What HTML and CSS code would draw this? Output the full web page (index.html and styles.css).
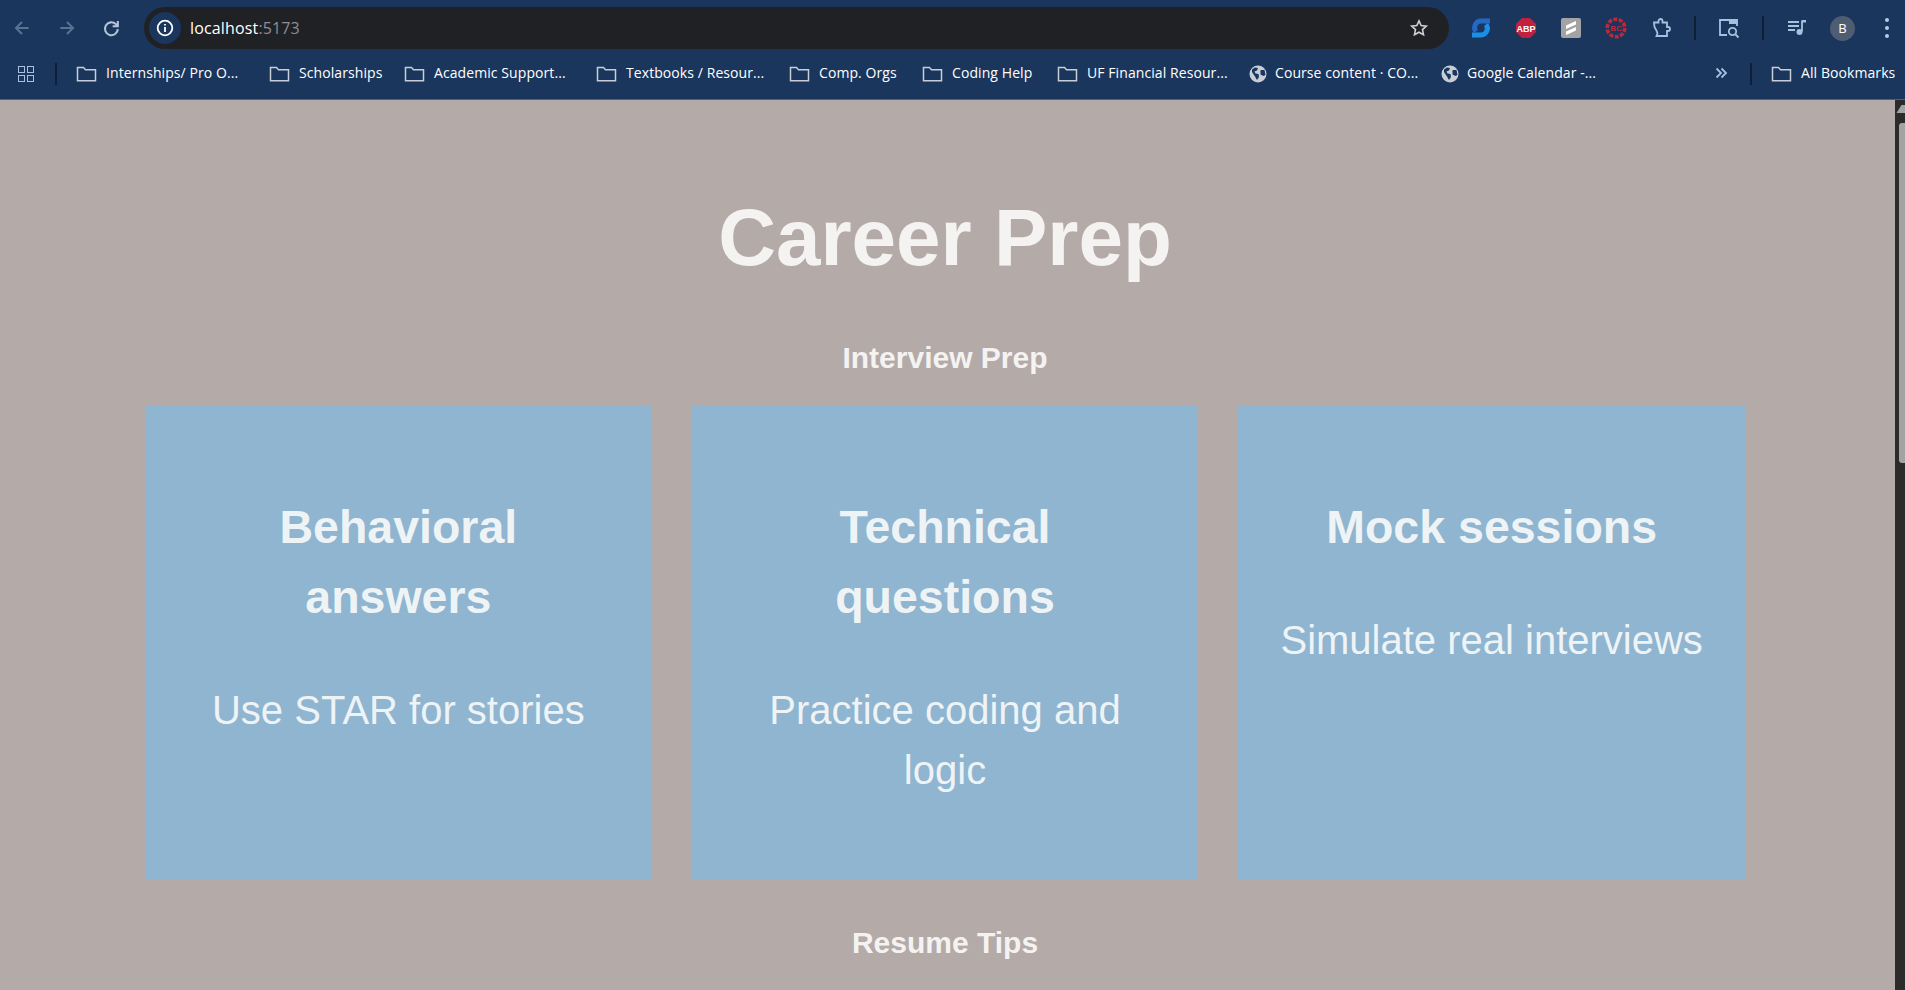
FILE: index.html
```html
<!DOCTYPE html>
<html lang="en">
<head>
<meta charset="utf-8">
<title>Career Prep</title>
<link rel="stylesheet" href="styles.css">
</head>
<body>
<header class="chrome">
  <div class="toolbar">
    <div class="nav">
      <span class="btn dim"><svg width="22" height="22" viewBox="0 0 20 20"><path d="M16 10H5M10 4.500 4.500 10l5.500 5.500" class="ln"/></svg></span>
      <span class="btn dim"><svg width="22" height="22" viewBox="0 0 20 20"><path d="M4 10h11M10 4.500l5.500 5.500-5.500 5.500" class="ln"/></svg></span>
      <span class="btn"><svg width="23" height="23" viewBox="0 0 20 20"><path d="M15.500 10.500a5.600 5.600 0 1 1-1.700-4.300L15.500 8M15.500 3.500V8H11" class="ln"/></svg></span>
    </div>
    <div class="omnibox">
      <span class="site-info"><svg width="18" height="18" viewBox="0 0 18 18"><circle cx="9" cy="9" r="7.300" class="ln white"/><path d="M9 8v5M9 5v1.600" class="ln white"/></svg></span>
      <span class="url">localhost<span class="port">:5173</span></span>
      <svg class="star" width="20" height="20" viewBox="0 0 20 20"><path d="M10 2.800l2.200 4.700 5.100.6-3.800 3.500 1 5.100-4.500-2.500-4.500 2.500 1-5.100-3.800-3.500 5.100-.6z" class="ln light"/></svg>
    </div>
    <div class="exts">
      <span class="ext"><svg width="22" height="22" viewBox="0 0 22 22"><path d="M2 18h9a6.500 6.500 0 0 0 5-10.500" class="swoosh bright"/><path d="M20 4h-9a6.500 6.500 0 0 0-5 10.500" class="swoosh deep"/></svg></span>
      <span class="ext"><svg width="22" height="22" viewBox="0 0 22 22"><path d="M7 1h8l6 6v8l-6 6H7l-6-6V7z" fill="#c1203e"/><text x="11" y="14.500" class="abp">ABP</text></svg></span>
      <span class="ext"><svg width="22" height="22" viewBox="0 0 22 22"><rect x="1" y="1" width="20" height="20" rx="2" fill="#a3a3a3"/><path d="M6 8.500 16 4v3.500L6 12zM6 14.500 16 10v3.500L6 18z" fill="#fff"/></svg></span>
      <span class="ext"><svg width="22" height="22" viewBox="0 0 22 22"><circle cx="11" cy="11" r="8.800" fill="none" stroke="#b92a3c" stroke-width="3.600" stroke-dasharray="4 1.500"/><text x="11" y="14" class="bc">BC</text></svg></span>
      <span class="ext"><svg width="22" height="22" viewBox="0 0 22 22"><path d="M4 5.500h4.500V4a2 2 0 0 1 4 0v1.500H17V10h1a2 2 0 0 1 0 4h-1v5H6.500l1-2.500-.8-2.500L4.500 10z" class="ln icon"/></svg></span>
      <span class="sep"></span>
      <span class="ext"><svg width="24" height="24" viewBox="0 0 24 24"><path d="M10 19H3V4h17v6" class="ln icon"/><path d="M12 3.500h8.500V8H12z" fill="#a8c0de"/><circle cx="15.500" cy="15.500" r="3.700" class="ln icon"/><path d="M18.500 18.500l3 3" class="ln icon"/></svg></span>
      <span class="sep"></span>
      <span class="ext"><svg width="22" height="22" viewBox="0 0 22 22"><path d="M2 5h11M2 9h11M2 13h7" class="ln icon"/><path d="M16 3.500v11" class="ln icon"/><path d="M16 3h4v2.500h-4z" fill="#a8c0de"/><circle cx="13.500" cy="15" r="3" fill="#a8c0de"/></svg></span>
      <span class="avatar">B</span>
      <span class="dots"><i></i><i></i><i></i></span>
    </div>
  </div>
  <nav class="bookmarks">
    <span class="apps"><i></i><i></i><i></i><i></i></span>
    <span class="bar"></span>
    <a class="bm"><svg class="folder" width="21" height="16" viewBox="0 0 21 16"><path d="M1.500 1.500h6l2 2.200h10v11h-18z" class="ln pale"/></svg><span class="label">Internships/ Pro O...</span></a>
    <a class="bm"><svg class="folder" width="21" height="16" viewBox="0 0 21 16"><path d="M1.500 1.500h6l2 2.200h10v11h-18z" class="ln pale"/></svg><span class="label">Scholarships</span></a>
    <a class="bm"><svg class="folder" width="21" height="16" viewBox="0 0 21 16"><path d="M1.500 1.500h6l2 2.200h10v11h-18z" class="ln pale"/></svg><span class="label">Academic Support...</span></a>
    <a class="bm"><svg class="folder" width="21" height="16" viewBox="0 0 21 16"><path d="M1.500 1.500h6l2 2.200h10v11h-18z" class="ln pale"/></svg><span class="label">Textbooks / Resour...</span></a>
    <a class="bm"><svg class="folder" width="21" height="16" viewBox="0 0 21 16"><path d="M1.500 1.500h6l2 2.200h10v11h-18z" class="ln pale"/></svg><span class="label">Comp. Orgs</span></a>
    <a class="bm"><svg class="folder" width="21" height="16" viewBox="0 0 21 16"><path d="M1.500 1.500h6l2 2.200h10v11h-18z" class="ln pale"/></svg><span class="label">Coding Help</span></a>
    <a class="bm"><svg class="folder" width="21" height="16" viewBox="0 0 21 16"><path d="M1.500 1.500h6l2 2.200h10v11h-18z" class="ln pale"/></svg><span class="label">UF Financial Resour...</span></a>
    <a class="bm"><svg class="globe" width="18" height="18" viewBox="0 0 18 18"><circle cx="9" cy="9" r="8.500" fill="#c9ced6"/><path d="M3 4.500l3-2 3 .5-1 2.500-2.500 1 1 2 3 .5.500 3-2 3-2-3.500-3-4.500zM11.500 5h4l1 5-2 1-3-1.500z" fill="#1a365d"/></svg><span class="label">Course content · CO...</span></a>
    <a class="bm"><svg class="globe" width="18" height="18" viewBox="0 0 18 18"><circle cx="9" cy="9" r="8.500" fill="#c9ced6"/><path d="M3 4.500l3-2 3 .5-1 2.500-2.500 1 1 2 3 .5.500 3-2 3-2-3.500-3-4.500zM11.500 5h4l1 5-2 1-3-1.500z" fill="#1a365d"/></svg><span class="label">Google Calendar -...</span></a>
    <span class="more"><svg width="14" height="14" viewBox="0 0 14 14"><path d="M2.500 2.500 7 7l-4.500 4.500M7.500 2.500 12 7l-4.500 4.500" class="ln icon"/></svg></span>
    <span class="bar"></span>
    <a class="bm"><svg class="folder" width="21" height="16" viewBox="0 0 21 16"><path d="M1.500 1.500h6l2 2.200h10v11h-18z" class="ln pale"/></svg><span class="label">All Bookmarks</span></a>
  </nav>
</header>
<div class="viewport">
  <main class="page">
    <h1 class="title">Career Prep</h1>
    <section class="block">
      <h2 class="heading">Interview Prep</h2>
      <div class="cards">
        <article class="card"><h3>Behavioral answers</h3><p>Use STAR for stories</p></article>
        <article class="card"><h3>Technical questions</h3><p>Practice coding and logic</p></article>
        <article class="card"><h3>Mock sessions</h3><p>Simulate real interviews</p></article>
      </div>
    </section>
    <section class="block">
      <h2 class="heading">Resume Tips</h2>
      <div class="cards">
        <article class="card"></article>
        <article class="card"></article>
        <article class="card"></article>
      </div>
    </section>
  </main>
  <div class="scrollbar">
    <svg class="arrow" width="10" height="16" viewBox="0 0 10 16"><path d="M6.500 5 1.500 13H10V5z" fill="#a3a3a3"/></svg>
    <span class="thumb"></span>
  </div>
</div>
</body>
</html>
```
FILE: styles.css
```css
* { box-sizing: border-box; }
html, body { margin: 0; height: 100%; overflow: hidden; }
body { display: flex; flex-direction: column; font-family: "Liberation Sans", Arial, sans-serif; background: #b4aaa8; }

.chrome { flex: none; height: 100px; background: #1a365d; border-bottom: 1px solid #4a6182; font-family: "Open Sans", "Noto Sans", sans-serif; color: #fff; }
.ln { fill: none; stroke: #b4c4da; stroke-width: 1.8; }
.ln.white { stroke: #fff; }
.ln.light { stroke: #cfd0d3; stroke-width: 1.6; }
.ln.icon { stroke: #a8c0de; stroke-width: 1.8; }
.ln.pale { stroke: #c9ced6; stroke-width: 1.5; }
.swoosh { fill: none; stroke-width: 5; }
.swoosh.deep { stroke: #2468c4; }
.swoosh.bright { stroke: #1b8fe6; }

.toolbar { height: 56px; display: flex; align-items: center; }
.nav { width: 144px; display: flex; flex: none; }
.btn { width: 45px; height: 42px; display: flex; align-items: center; justify-content: center; }
.btn:first-child { margin-left: -1px; }
.btn.dim { opacity: .42; }
.omnibox { width: 1305px; height: 42px; flex: none; background: #202124; border-radius: 21px; display: flex; align-items: center; padding: 0 20px 0 5px; }
.site-info { width: 32px; height: 32px; border-radius: 50%; background: #1a365d; display: flex; align-items: center; justify-content: center; flex: none; }
.url { margin-left: 9px; font-size: 16px; letter-spacing: .15px; flex: 1; }
.port { color: #8c8e94; }
.exts { flex: 1; display: flex; align-items: center; padding-left: 21px; }
.ext { width: 22px; height: 24px; margin-right: 23px; display: flex; align-items: center; justify-content: center; }
.ext svg { flex: none; }
.sep { width: 2px; height: 24px; background: #0f1f38; margin: 0 22px 0 -1px; }
.avatar { width: 25px; height: 25px; margin-left: -1px; border-radius: 50%; background: #4f5d70; font-size: 13px; display: flex; align-items: center; justify-content: center; flex: none; }
.dots { margin-left: 30px; display: flex; flex-direction: column; gap: 4px; }
.dots i { width: 4px; height: 4px; border-radius: 50%; background: #b8cbe4; display: block; }
.abp { font: bold 9px "Liberation Sans", sans-serif; fill: #fff; text-anchor: middle; }
.bc { font: bold 8px "Liberation Sans", sans-serif; fill: #b92a3c; text-anchor: middle; }

.bookmarks { height: 36px; padding-left: 18px; display: grid; grid-template-columns: 37px 2px 193px 135px 192px 193px 133px 135px 192px 192px 292px 36px 2px auto; align-items: center; font-size: 14px; letter-spacing: .08px; }
.apps { display: grid; grid-template-columns: 7px 7px; gap: 2px; width: 16px; }
.apps i { height: 7px; border: 1.4px solid #a8c0de; display: block; }
.bar { width: 2px; height: 22px; background: #0f1f38; }
.bm { margin-left: 19px; display: flex; align-items: center; gap: 9px; white-space: nowrap; }
.label { line-height: 18px; margin-top: -2px; }
.globe { flex: none; margin-right: -1px; }
.folder { flex: none; }

.viewport { flex: 1; min-height: 0; display: flex; overflow: hidden; }
.page { flex: 1; height: 100%; overflow: hidden; padding: 0 5px 0 0; }
.title { margin: 0; padding-top: 92px; font-size: 80px; line-height: 92px; font-weight: 700; color: #f5f3f2; text-align: center; }
.heading { margin: 0; padding-top: 56px; height: 121px; font-size: 30px; line-height: 35px; font-weight: 700; color: #f5f3f2; text-align: center; }
.block + .block .heading { padding-top: 46px; height: 110px; }
.cards { width: 1600px; margin: 0 auto; display: grid; grid-template-columns: repeat(3, 1fr); gap: 40px; }
.card { height: 474px; padding: 87px 35px 0; background: #8fb5d0; color: #eef3f6; text-align: center; }
.card h3 { margin: 0; font-size: 46.5px; line-height: 70px; font-weight: 700; }
.card p { margin: 48px 0 0; font-size: 40px; line-height: 60px; }

.scrollbar { flex: none; width: 10px; background: #2b2b2b; position: relative; }
.arrow { position: absolute; top: 0; left: 0; }
.thumb { position: absolute; top: 23px; left: 4px; right: 0; height: 340px; background: #a3a3a3; border-radius: 3px 0 0 3px; }
```
